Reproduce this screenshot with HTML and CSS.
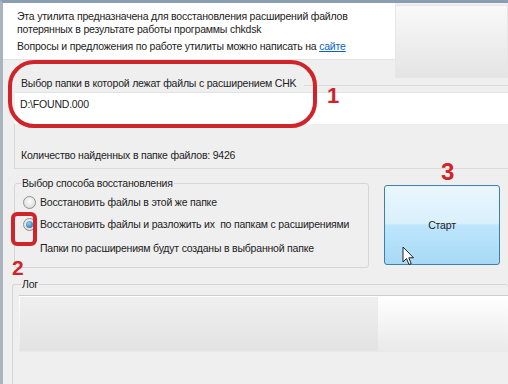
FILE: index.html
```html
<!DOCTYPE html>
<html lang="ru">
<head>
    <meta charset="UTF-8">
    <title>CHK восстановление</title>
    <link rel="stylesheet" href="styles.css">
</head>
<body>
    <div class="window">
        <div class="top">
            <div class="about">
                <p class="about-text">Эта утилита предназначена для восстановления расширений файлов<br>потерянных в результате работы программы chkdsk</p>
                <p class="about-link">Вопросы и предложения по работе утилиты можно написать на <a href="#">сайте</a></p>
            </div>
            <div class="banner"></div>
        </div>

        <div class="folder">
            <div class="folder-label">Выбор папки в которой лежат файлы с расширением CHK</div>
            <div class="folder-input">D:\FOUND.000</div>
        </div>

        <div class="count">Количество найденных в папке файлов: 9426</div>

        <div class="mode-row">
            <fieldset class="mode">
                <legend>Выбор способа восстановления</legend>
                <div class="radio-row"><span class="radio"></span>Восстановить файлы в этой же папке</div>
                <div class="radio-row"><span class="radio checked"></span>Восстановить файлы и разложить их&nbsp; по папкам с расширениями</div>
                <div class="radio-note">Папки по расширениям будут созданы в выбранной папке</div>
            </fieldset>
            <button class="start-btn">Старт</button>
        </div>

        <fieldset class="log">
            <legend>Лог</legend>
            <div class="log-box">
                <div class="log-fill"></div>
            </div>
        </fieldset>
    </div>

    <!-- пометки поверх окна -->
    <div class="mark mark-folder"></div>
    <div class="mark mark-radio"></div>
    <div class="num num-1">1</div>
    <div class="num num-2">2</div>
    <div class="num num-3">3</div>
    <svg class="cursor" width="13" height="20" viewBox="0 0 13 20">
        <path d="M1 1 L1 16 L4.5 12.5 L7 18.5 L9.2 17.6 L6.8 11.8 L11.5 11.8 Z" fill="#fff" stroke="#222" stroke-width="1" stroke-linejoin="round"/>
    </svg>
</body>
</html>
```

FILE: styles.css
```css
* {
    margin: 0;
    padding: 0;
    box-sizing: border-box;
}

body {
    width: 508px;
    height: 384px;
    overflow: hidden;
    position: relative;
    background-color: #ececec;
    font-family: 'Liberation Sans', Arial, sans-serif;
    font-size: 10.5px;
    letter-spacing: -0.2px;
    line-height: 13px;
    color: #222;
}

.window {
    height: 384px;
    border-left: 3px solid #a9b4bf;
    border-top: 3px solid #8a9db1;
    background-color: #efefef;
}

.top {
    display: flex;
    align-items: flex-start;
    height: 75px;
}

.about {
    width: 392px;
    height: 57px;
    background-color: #fff;
    padding: 7px 0 0 14px;
    border-bottom: 1px solid #e2e2e2;
}

.about-link {
    margin-top: 4px;
}

.about-link a {
    color: #0a5fc4;
}

.banner {
    flex: 1;
    height: 73px;
    margin-top: 2px;
    border: 1px solid #e6e6e6;
    background: linear-gradient(#f9f9f9, #e4e4e4);
}

.folder {
    margin-left: 12px;
}

.folder-label {
    margin-top: -1px;
    padding-left: 6px;
    display: flex;
    align-items: center;
}

.folder-label::after {
    content: '';
    flex: 1;
    height: 1px;
    margin: 4px 0 0 8px;
    background-color: #dcdcdc;
}

.folder-input {
    margin-top: 2px;
    height: 32px;
    background-color: #fff;
    border-top: 1px solid #e2e2e2;
    padding: 5px 5px 0;
}

.count {
    margin-left: 11px;
    height: 45px;
    padding: 25px 0 0 6px;
    border-left: 1px solid #dadada;
    border-bottom: 1px solid #dadada;
}

.mode-row {
    display: flex;
    align-items: flex-start;
    margin-left: 11px;
}

fieldset {
    border: 1px solid #d6d6d6;
    border-radius: 3px;
}

legend {
    padding: 0 1px;
}

.mode {
    width: 355px;
    margin-top: 8px;
    padding: 1px 6px 8px;
}

.radio-row {
    display: flex;
    align-items: center;
    height: 22px;
    white-space: nowrap;
}

.radio {
    flex: none;
    width: 13px;
    height: 13px;
    margin: 0 4px 0 2px;
    border-radius: 50%;
    border: 1px solid #8e8f8f;
    background: radial-gradient(circle at 50% 40%, #fcfcfc, #d4d4d4);
    display: flex;
    align-items: center;
    justify-content: center;
}

.radio.checked::after {
    content: '';
    width: 7px;
    height: 7px;
    border-radius: 50%;
    background: radial-gradient(circle at 40% 35%, #8ad1f7, #1d5f9a);
}

.radio-note {
    height: 24px;
    line-height: 26px;
    padding-left: 19px;
    white-space: nowrap;
}

.start-btn {
    width: 116px;
    height: 80px;
    margin: 16px 0 0 15px;
    border: 1px solid #3c7fb1;
    border-radius: 3px;
    background: linear-gradient(#eaf6fd 0%, #d9f0fc 48%, #bee6fd 50%, #a7d9f5 100%);
    font-family: 'Liberation Sans', Arial, sans-serif;
    font-size: 10.5px;
    letter-spacing: -0.2px;
    color: #222;
}

.log {
    margin: 10px 0 0 9px;
    height: 120px;
    padding: 0 0 0 6px;
    border-right: none;
    border-bottom: none;
}

.log legend {
    margin-left: 2px;
}

.log-box {
    margin-top: 4px;
    border-top: 1px solid #cdcdcd;
    padding-top: 1px;
    background: linear-gradient(#fff 0, #fbfbfb 10px, #e9e9e9 56px, #ececec 56px);
    height: 57px;
}

.log-fill {
    width: 358px;
    height: 54px;
    margin-left: 1px;
    background: linear-gradient(#efefef, #e3e3e3);
}

.mark {
    position: absolute;
    border: 4px solid #d0242b;
}

.mark-folder {
    left: 8px;
    top: 60px;
    width: 309px;
    height: 68px;
    border-radius: 26px;
}

.mark-radio {
    left: 11px;
    top: 212px;
    width: 26px;
    height: 34px;
    border-radius: 6px;
}

.num {
    position: absolute;
    color: #d0242b;
    font-weight: bold;
    letter-spacing: 0;
    line-height: 1;
}

.num-1 {
    left: 327px;
    top: 85px;
    font-size: 22px;
}

.num-2 {
    left: 12px;
    top: 257px;
    font-size: 21px;
}

.num-3 {
    left: 441px;
    top: 160px;
    font-size: 24px;
}

.cursor {
    position: absolute;
    left: 402px;
    top: 246px;
}
```
